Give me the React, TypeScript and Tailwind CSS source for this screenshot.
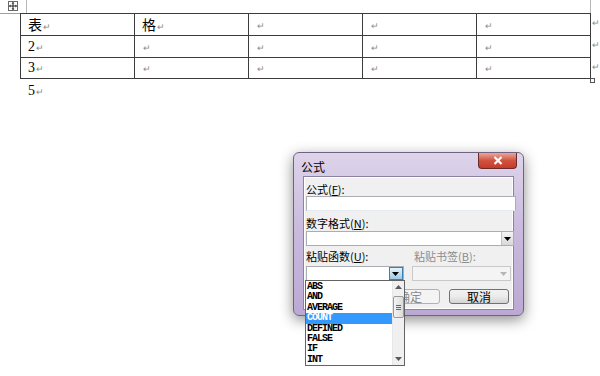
import React from 'react';

const Mark = () => <span className="text-[9px] text-[#8a8a8a] ml-[1px] align-baseline">↵</span>;

const rows = [
  ['表', '格', '', '', ''],
  ['2', '', '', '', ''],
  ['3', '', '', '', ''],
];

const funcs = ['ABS', 'AND', 'AVERAGE', 'COUNT', 'DEFINED', 'FALSE', 'IF', 'INT'];

const Arrow = ({ color = '#000' }: { color?: string }) => (
  <svg width="7" height="4" viewBox="0 0 7 4">
    <path d="M0 0h7L3.5 4z" fill={color} />
  </svg>
);

const cjk = { fontFamily: '"Noto Sans CJK SC", "Liberation Sans", sans-serif' };

const App = () => {
  return (
    <div className="relative w-[600px] h-[376px] bg-white overflow-hidden" style={{ fontFamily: '"Liberation Serif", "Noto Sans CJK SC", serif' }}>
      {/* crop marks + move handle */}
      <div className="absolute left-0 top-[13px] w-[20px] h-px bg-[#a0a0a0]" />
      <div className="absolute left-[26px] top-0 w-px h-[13px] bg-[#b8b8b8]" />
      <div className="absolute left-[590px] top-0 w-px h-[13px] bg-[#b8b8b8]" />
      <div className="absolute left-[8px] top-[1px] w-[10px] h-[10px] border border-[#6a6a6a] bg-white flex items-center justify-center">
        <svg width="8" height="8" viewBox="0 0 8 8">
          <path d="M4 0.5v7M0.5 4h7" stroke="#222" strokeWidth="1" />
          <path d="M4 0l-1.5 1.5h3zM4 8l-1.5-1.5h3zM0 4l1.5-1.5v3zM8 4l-1.5-1.5v3z" fill="#222" />
        </svg>
      </div>

      <div className="pt-[13px] pl-[20px] flex items-start">
        <table className="table-fixed border-collapse w-[577px] text-[14px] leading-none text-black">
          <tbody>
            {rows.map((r, i) => (
              <tr key={i} className={i === 2 ? 'h-[21px]' : 'h-[22px]'}>
                {r.map((c, j) => (
                  <td key={j} className="border border-[#3c3c3c] pl-[7px] p-0 align-middle">
                    {c && (
                      <span style={/[表格]/.test(c) ? cjk : undefined}>{c}</span>
                    )}
                    <Mark />
                  </td>
                ))}
              </tr>
            ))}
          </tbody>
        </table>
        <div className="flex flex-col">
          <span className="h-[22px] flex items-center"><Mark /></span>
          <span className="h-[22px] flex items-center"><Mark /></span>
          <span className="h-[21px] flex items-center"><Mark /></span>
          <span className="w-[5px] h-[5px] border border-[#555] -ml-[1px]" />
        </div>
      </div>
      <p className="pl-[28px] mt-[1px] text-[14px] leading-none">
        5<Mark />
      </p>

      {/* dialog */}
      <div className="absolute left-[293px] top-[152px] w-[231px] h-[164px] rounded-[6px] border border-[#6f6285] bg-gradient-to-b from-[#ddd3ea] via-[#c9b9dd] to-[#bba9d3] shadow-[0_4px_14px_rgba(0,0,0,0.45)] flex flex-col px-[9px] pb-[5px]" style={cjk}>
        <div className="h-[23px] flex items-start justify-between">
          <span className="text-[12px] text-black pt-[5px] -ml-[2px]">公式</span>
          <div className="w-[39px] h-[16px] -mr-[3px] rounded-b-[4px] border border-t-0 border-[#6b2a2a] bg-gradient-to-b from-[#e8a79a] via-[#d0523f] to-[#c8392a] flex items-center justify-center">
            <svg width="10" height="9" viewBox="0 0 10 9">
              <path d="M1.5 1l7 7M8.5 1l-7 7" stroke="#fff" strokeWidth="2.2" />
            </svg>
          </div>
        </div>
        <div className="flex-1 bg-[#f0f0f0] border border-[#8e82a3] shadow-[inset_0_0_0_1px_#fff] px-[2px] pt-[5px] text-[11px] text-black leading-[14px]">
          <div>公式(<u>F</u>):</div>
          <div className="h-[15px] bg-white border border-[#abadb3] border-b-[#e3e9ef] w-[210px]" />
          <div className="mt-[5px]">数字格式(<u>N</u>):</div>
          <div className="mt-[1px] h-[15px] w-[208px] bg-white border border-[#abadb3] flex justify-end">
            <div className="w-[12px] h-full border-l border-[#c0c0c0] bg-gradient-to-b from-[#f4f4f4] to-[#d8d8d8] flex items-center justify-center">
              <Arrow />
            </div>
          </div>
          <div className="mt-[3px] flex">
            <span className="w-[108px]">粘贴函数(<u>U</u>):</span>
            <span className="text-[#8c8c8c]">粘贴书签(<u>B</u>):</span>
          </div>
          <div className="mt-[3px] flex gap-[8px]">
            <div className="h-[15px] w-[100px] bg-white border border-[#abadb3] flex justify-end">
              <div className="w-[14px] h-full border border-[#3c7fb1] bg-gradient-to-b from-[#e5f4fc] to-[#9ccbe6] flex items-center justify-center">
                <Arrow />
              </div>
            </div>
            <div className="h-[15px] w-[102px] bg-[#f4f4f4] border border-[#c9c9c9] flex justify-end">
              <div className="w-[13px] h-full flex items-center justify-center">
                <Arrow color="#b5b5b5" />
              </div>
            </div>
          </div>
          <div className="mt-[8px] flex justify-end gap-[9px] pr-[2px] text-[12px]">
            <div className="w-[60px] h-[15px] rounded-[3px] border border-[#adb2b5] bg-[#f4f4f4] text-[#8a8a8a] flex items-center justify-center">确定</div>
            <div className="w-[60px] h-[15px] rounded-[3px] border border-[#707070] bg-gradient-to-b from-[#f2f2f2] via-[#ebebeb] to-[#d4d4d4] flex items-center justify-center">取消</div>
          </div>
        </div>
      </div>

      {/* dropdown list */}
      <div className="absolute left-[305px] top-[280px] w-[100px] h-[86px] bg-white border border-[#646464] flex">
        <ul className="flex-1 pt-[1px]" style={{ fontFamily: '"Liberation Mono", monospace' }}>
          {funcs.map((f) => (
            <li
              key={f}
              className={`h-[10.4px] leading-[10.4px] pl-[1px] text-[10px] font-bold tracking-[-1px] ${
                f === 'COUNT' ? 'bg-[#3399ff] text-white' : 'text-black'
              }`}
            >
              {f}
            </li>
          ))}
        </ul>
        <div className="w-[12px] bg-[#f0f0f0] border-l border-[#e6e6e6] flex flex-col items-center">
          <div className="h-[12px] flex items-center justify-center">
            <svg width="7" height="4" viewBox="0 0 7 4"><path d="M0 4h7L3.5 0z" fill="#5a5a5a" /></svg>
          </div>
          <div className="mt-[3px] w-[11px] h-[22px] rounded-[2px] border border-[#9a9a9a] bg-gradient-to-r from-[#f3f3f3] to-[#dcdcdc] flex flex-col items-center justify-center gap-[1px]">
            <span className="w-[5px] h-px bg-[#666]" />
            <span className="w-[5px] h-px bg-[#666]" />
            <span className="w-[5px] h-px bg-[#666]" />
          </div>
          <div className="flex-1" />
          <div className="h-[12px] flex items-center justify-center">
            <Arrow color="#5a5a5a" />
          </div>
        </div>
      </div>
    </div>
  );
};

export default App;
